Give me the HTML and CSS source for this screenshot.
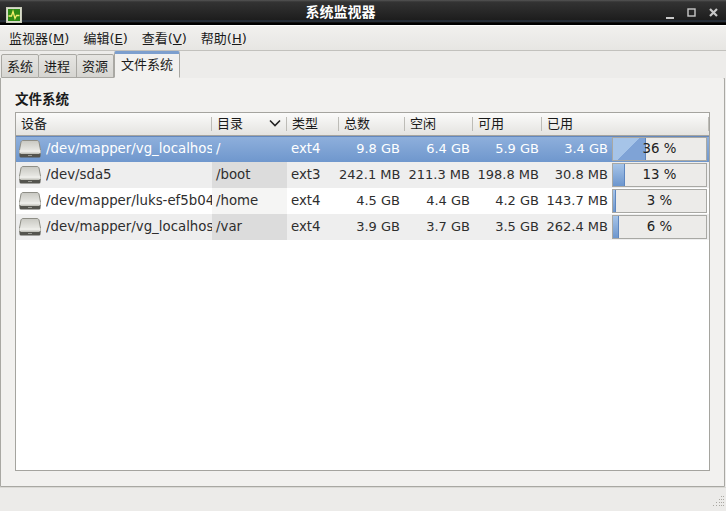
FILE: index.html
```html
<!DOCTYPE html>
<html lang="zh">
<head>
<meta charset="utf-8">
<title>系统监视器</title>
<link rel="stylesheet" href="styles.css">
</head>
<body>
<div class="window">
  <header class="titlebar">
    <svg class="app-icon" width="16" height="16" viewBox="0 0 16 16">
      <rect x="0.5" y="0.5" width="15" height="15" fill="#d9dccb" stroke="#c8cbb8"/>
      <rect x="2" y="2" width="12" height="12" fill="#2f8a14"/>
      <path d="M2.5 9H5.5L7 4.5 9 11.5 10.5 8.5H13.5" fill="none" stroke="#f2ee6a" stroke-width="1.3"/>
    </svg>
    <div class="title">系统监视器</div>
    <div class="wm-buttons">
      <svg width="12" height="12" viewBox="0 0 12 12"><rect x="2" y="10" width="8" height="2" fill="#c8c8c8"/></svg>
      <svg width="12" height="12" viewBox="0 0 12 12"><rect x="2" y="2" width="7" height="7" fill="none" stroke="#c8c8c8" stroke-width="1.4"/></svg>
      <svg width="12" height="12" viewBox="0 0 12 12"><path d="M2 2l7 7M9 2l-7 7" stroke="#c8c8c8" stroke-width="2.2"/></svg>
    </div>
  </header>
  <nav class="menubar">
    <span class="menu">监视器(<u>M</u>)</span>
    <span class="menu">编辑(<u>E</u>)</span>
    <span class="menu">查看(<u>V</u>)</span>
    <span class="menu">帮助(<u>H</u>)</span>
  </nav>
  <div class="tabs">
    <span class="tab">系统</span>
    <span class="tab">进程</span>
    <span class="tab">资源</span>
    <span class="tab active">文件系统</span>
  </div>
  <main class="panel">
    <h1 class="heading">文件系统</h1>
    <section class="tree">
      <div class="head">
        <div class="hc">设备</div>
        <div class="hc sort">目录<svg width="12" height="8" viewBox="0 0 12 8"><path d="M1 1.5l5 5 5-5" fill="none" stroke="#222" stroke-width="1.6"/></svg></div>
        <div class="hc">类型</div>
        <div class="hc">总数</div>
        <div class="hc">空闲</div>
        <div class="hc">可用</div>
        <div class="hc">已用</div>
      </div>
      <div class="item selected">
        <div class="c dev"><svg class="disk"><use href="#disk"/></svg><span class="clip">/dev/mapper/vg_localhos</span></div>
        <div class="c dir">/</div><div class="c">ext4</div>
        <div class="c num">9.8 GB</div><div class="c num">6.4 GB</div><div class="c num">5.9 GB</div><div class="c num">3.4 GB</div>
        <div class="c pc"><div class="bar"><div class="fill" style="width:36%"></div><span class="pct">36 %</span></div></div>
      </div>
      <div class="item odd">
        <div class="c dev"><svg class="disk"><use href="#disk"/></svg><span class="clip">/dev/sda5</span></div>
        <div class="c dir">/boot</div><div class="c">ext3</div>
        <div class="c num">242.1 MB</div><div class="c num">211.3 MB</div><div class="c num">198.8 MB</div><div class="c num">30.8 MB</div>
        <div class="c pc"><div class="bar"><div class="fill" style="width:13%"></div><span class="pct">13 %</span></div></div>
      </div>
      <div class="item">
        <div class="c dev"><svg class="disk"><use href="#disk"/></svg><span class="clip">/dev/mapper/luks-ef5b04</span></div>
        <div class="c dir">/home</div><div class="c">ext4</div>
        <div class="c num">4.5 GB</div><div class="c num">4.4 GB</div><div class="c num">4.2 GB</div><div class="c num">143.7 MB</div>
        <div class="c pc"><div class="bar"><div class="fill" style="width:3%"></div><span class="pct">3 %</span></div></div>
      </div>
      <div class="item odd">
        <div class="c dev"><svg class="disk"><use href="#disk"/></svg><span class="clip">/dev/mapper/vg_localhos</span></div>
        <div class="c dir">/var</div><div class="c">ext4</div>
        <div class="c num">3.9 GB</div><div class="c num">3.7 GB</div><div class="c num">3.5 GB</div><div class="c num">262.4 MB</div>
        <div class="c pc"><div class="bar"><div class="fill" style="width:6%"></div><span class="pct">6 %</span></div></div>
      </div>
    </section>
  </main>
  <footer class="statusbar">
    <svg width="12" height="12" viewBox="0 0 12 12" fill="#a9a7a1">
      <rect x="9" y="1" width="1" height="1"/><rect x="11" y="1" width="1" height="1"/>
      <rect x="7" y="4" width="1" height="1"/><rect x="9" y="4" width="1" height="1"/><rect x="11" y="4" width="1" height="1"/>
      <rect x="4" y="7" width="1" height="1"/><rect x="7" y="7" width="1" height="1"/><rect x="9" y="7" width="1" height="1"/><rect x="11" y="7" width="1" height="1"/>
      <rect x="1" y="10" width="1" height="1"/><rect x="4" y="10" width="1" height="1"/><rect x="7" y="10" width="1" height="1"/><rect x="9" y="10" width="1" height="1"/><rect x="11" y="10" width="1" height="1"/>
    </svg>
  </footer>
</div>
<svg width="0" height="0" class="defs">
  <symbol id="disk" viewBox="0 0 22 18">
    <defs>
      <linearGradient id="platter" x1="0" y1="0" x2="0" y2="1">
        <stop offset="0" stop-color="#c8c8c2"/>
        <stop offset="1" stop-color="#f4f4f0"/>
      </linearGradient>
    </defs>
    <path d="M4 0.5H18C19 0.5 19.5 1 20 2L21.5 10V14H0.5V10L2 2C2.5 1 3 0.5 4 0.5Z" fill="url(#platter)" stroke="#8e8e86"/>
    <rect x="0.5" y="10" width="21" height="3" fill="#ecece8"/>
    <rect x="0.5" y="13" width="21" height="4.5" rx="1.5" fill="#55554f"/>
    <rect x="1.5" y="12.5" width="19" height="1.5" fill="#c4c4bd"/>
    <rect x="9" y="15" width="4" height="1" fill="#9a9a94"/>
  </symbol>
</svg>
</body>
</html>
```
FILE: styles.css
```css
* { box-sizing: border-box; }
html, body { margin: 0; padding: 0; }
body {
  width: 726px;
  height: 511px;
  overflow: hidden;
  font-family: "DejaVu Sans", "Noto Sans CJK SC", sans-serif;
  font-size: 13px;
  color: #1a1a1a;
  background: #edecea;
}
.window { display: flex; flex-direction: column; height: 511px; }
.defs { position: absolute; }
.titlebar {
  height: 26px;
  flex: none;
  display: flex;
  align-items: center;
  padding: 4px 6px 1px 6px;
  background: linear-gradient(#555 0, #333 2px, #1d1d1d 20px, #2a3a4e 21px, #222 22px, #000 23px, #000 25px, #fff 25px);
}
.app-icon { flex: none; }
.title {
  flex: 1;
  text-align: center;
  color: #fff;
  font-family: "Noto Sans CJK SC", sans-serif;
  font-weight: 700;
  font-size: 14px;
  line-height: 18px;
  margin: -7px 5px 0 0;
}
.wm-buttons { display: flex; gap: 10px; margin-top: -3px; }
.menubar {
  height: 25px;
  flex: none;
  display: flex;
  align-items: center;
  background: linear-gradient(#f1f0ee, #e7e6e3);
  border-bottom: 1px solid #c2c1bd;
}
.menu {
  padding: 0 6px 2px 8px;
  font-size: 13px;
}
.menu:first-child { padding-left: 9px; }
.tabs {
  height: 27px;
  flex: none;
  display: flex;
  align-items: flex-end;
  padding-left: 1px;
  background: #edecea;
  position: relative;
  z-index: 1;
  margin-bottom: -1px;
}
.tab {
  height: 24px;
  padding: 0 6px 0 5px;
  border: 1px solid #a9a8a3;
  border-left-width: 0;
  border-radius: 2px 2px 0 0;
  background: linear-gradient(#e6e5e2, #d6d5d1);
  line-height: 24px;
  font-size: 13px;
}
.tab:first-child { border-left-width: 1px; padding: 0 5px; }
.tab:nth-child(3) { padding: 0 5px; }
.tab.active {
  height: 27px;
  padding: 0 6px;
  background: #f2f1ef;
  border: 1px solid #a9a8a3;
  border-top: 3px solid #7d9fce;
  border-bottom-color: #f2f1ef;
  line-height: 22px;
  font-size: 13px;
}
.panel {
  flex: 1;
  background: #f2f1ef;
  border: 1px solid #a9a8a3;
  border-radius: 0 2px 0 0;
  padding: 10px 14px 15px 14px;
  display: flex;
  flex-direction: column;
  margin-right: 1px;
}
.heading {
  margin: 0;
  font-family: "Noto Sans CJK SC", sans-serif;
  font-size: 13.5px;
  font-weight: 700;
  line-height: 20px;
  height: 24px;
}
.tree {
  flex: 1;
  background: #fff;
  border: 1px solid #a5a49f;
}
.head {
  display: grid;
  grid-template-columns: 196px 75px 52px 66px 68px 69px 1fr;
  height: 23px;
  background: linear-gradient(#fbfbfa, #e4e3e0);
  border-bottom: 1px solid #a5a49f;
}
.hc {
  font-family: "Noto Sans CJK SC", sans-serif;
  font-size: 13px;
  line-height: 20px;
  padding: 0 0 2px 5px;
  position: relative;
  display: flex;
  align-items: center;
  justify-content: space-between;
}
.hc::after {
  content: "";
  position: absolute;
  right: 0;
  top: 4px;
  bottom: 4px;
  width: 1px;
  background: #bdbcb7;
}
.sort svg { margin-right: 6px; }
.item {
  display: grid;
  grid-template-columns: 196px 75px 52px 65px 70px 69px 69px 96px;
  height: 26px;
  font-size: 13.33px;
  line-height: 25px;
  background: #fff;
  color: #2e2e2e;
}
.item.odd { background: #eeeeee; }
.c { white-space: nowrap; overflow: hidden; padding: 0 4px; }
.dir { background: #f5f5f4; }
.odd .dir { background: #dcdcdc; }
.num { text-align: right; padding-left: 0; font-size: 13px; }
.dev { display: flex; align-items: center; padding: 0 0 0 3px; gap: 5px; }
.disk { width: 22px; height: 18px; flex: none; }
.clip { overflow: hidden; margin-top: -1px; }
.selected {
  background: linear-gradient(#8fb0dc, #6f97cd);
  color: #fff;
  box-shadow: inset 0 1px #6488bd;
}
.selected .dir { background: transparent; }
.pc { padding: 1px 1px 1px 0; }
.bar {
  position: relative;
  height: 24px;
  border: 1px solid #a8a8a4;
  background: #ecebe9;
  text-align: center;
  line-height: 22px;
  color: #222;
}
.fill {
  position: absolute;
  left: 0;
  top: 0;
  bottom: 0;
  background: linear-gradient(#a6c4e8, #6d96cd);
  border-right: 1px solid #5e86bf;
}
.selected .fill { background: linear-gradient(135deg, #a6c4e8 50%, #7fa3d6 50%); }
.pct { position: relative; }
.statusbar {
  height: 24px;
  flex: none;
  background: #ecebe9;
  border-top: 1px solid #dad9d5;
  display: flex;
  justify-content: flex-end;
  align-items: flex-end;
  padding: 0 2px 4px 0;
}
```
